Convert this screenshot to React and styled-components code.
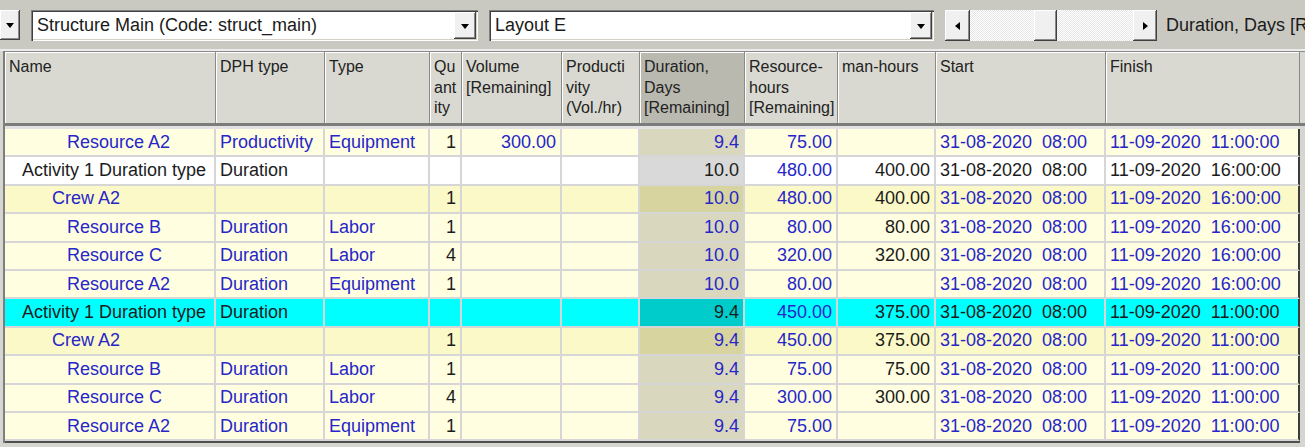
import React from 'react';
import styled, { createGlobalStyle } from 'styled-components';

const GlobalStyle = createGlobalStyle`
  body {
    margin: 0;
    background: #d6d6d0;
    font-family: "Liberation Sans", Arial, sans-serif;
  }
`;

const COLS = '211px 109px 105px 32px 100px 78px 105px 93px 98px 170px 194px';

const BLUE = '#2626c9';
const INK = '#1c1c1c';

const tones = {
  res: { bg: '#fffee1', dur: '#d9d7be' },
  crew: { bg: '#fcf9c8', dur: '#d7d4a0' },
  act: { bg: '#ffffff', dur: '#d9d9d9' },
  sel: { bg: '#00ffff', dur: '#00cccc' },
};

const indent = { act: 17, crew: 47, res: 62, sel: 17 };

const Page = styled.div`
  width: 1305px;
  height: 447px;
  overflow: hidden;
`;

const Toolbar = styled.div`
  height: 51px;
  box-sizing: border-box;
  background: #c9c9c1;
  border-bottom: 2px solid #ececec;
  display: flex;
  align-items: flex-start;
  padding-top: 10px;
  white-space: nowrap;
  overflow: hidden;
`;

const Combo = styled.div`
  display: flex;
  width: ${(p) => p.$width}px;
  margin-left: ${(p) => p.$gap}px;
  height: 31px;
  box-sizing: border-box;
  padding: 2px;
  background: #fff;
  box-shadow: inset 1px 1px #808080, inset 2px 2px #404040, inset -1px -1px #ffffff,
    inset -2px -2px #d4d0c8;
  flex-shrink: 0;
`;

const ComboText = styled.div`
  flex: 1;
  padding-left: 4px;
  font-size: 18px;
  line-height: 27px;
  color: #1a1a1a;
  overflow: hidden;
`;

const RaisedButton = styled.div`
  width: ${(p) => p.$width}px;
  height: ${(p) => p.$height || 27}px;
  box-sizing: border-box;
  background: #f0f0f0;
  box-shadow: inset -1px -1px #404040, inset 1px 1px #ffffff, inset -2px -2px #8a8a8a;
  display: flex;
  align-items: center;
  justify-content: center;
  flex-shrink: 0;
`;

const DownArrow = styled.span`
  width: 0;
  height: 0;
  border-left: 4.5px solid transparent;
  border-right: 4.5px solid transparent;
  border-top: 5px solid #000;
  margin-top: 1px;
`;

const SideArrow = styled.span`
  width: 0;
  height: 0;
  border-top: 4.5px solid transparent;
  border-bottom: 4.5px solid transparent;
  ${(p) => (p.$dir === 'left' ? 'border-right: 5px solid #000;' : 'border-left: 5px solid #000;')}
`;

const Scroll = styled.div`
  display: flex;
  margin-left: 11px;
  width: 212px;
  height: 31px;
  flex-shrink: 0;
`;

const Track = styled.div`
  width: ${(p) => p.$width}px;
  height: 31px;
  background: repeating-conic-gradient(#ffffff 0 25%, #e6e6e6 0 50%) 0 0 / 2px 2px;
`;

const ToolLabel = styled.div`
  margin-left: 9px;
  font-size: 18px;
  line-height: 31px;
  color: #1a1a1a;
`;

const Table = styled.div`
  margin-left: 3px;
  border-left: 2px solid #7e7e7e;
`;

const HeaderRow = styled.div`
  display: grid;
  grid-template-columns: ${COLS};
  height: 75px;
  box-sizing: border-box;
  border-top: 1px solid #8a8a8a;
  border-bottom: 3px solid #7c7c7c;
  background: #d9d9d1;
`;

const HeadCell = styled.div`
  box-sizing: border-box;
  padding: 5px 3px 0 4px;
  font-size: 16px;
  line-height: 20.5px;
  color: #222;
  background: ${(p) => (p.$active ? '#b9b9b0' : '#d9d9d1')};
  border-right: 1px solid #8a8a8a;
  box-shadow: inset 1px 1px #ffffff;
  overflow: hidden;
  white-space: nowrap;
`;

const Body = styled.div`
  width: 1295px;
  border-top: 3px solid #e2e2e2;
  border-bottom: 2px solid #505050;
`;

const Row = styled.div`
  display: grid;
  grid-template-columns: ${COLS};
  height: 28.4px;
`;

const Cell = styled.div`
  box-sizing: border-box;
  display: flex;
  align-items: center;
  justify-content: ${(p) => (p.$right ? 'flex-end' : 'flex-start')};
  padding: 0 4px 0 ${(p) => p.$indent || 4}px;
  background: ${(p) => p.$bg};
  color: ${(p) => p.$ink};
  font-size: 18px;
  white-space: pre;
  overflow: hidden;
  border-bottom: 2px solid #d6d6d6;
  border-right: 2px solid ${(p) => (p.$edge ? '#3c3c3c' : '#d6d6d6')};
`;

const headers = [
  { label: ['Name'] },
  { label: ['DPH type'] },
  { label: ['Type'] },
  { label: ['Qu', 'ant', 'ity'] },
  { label: ['Volume', '[Remaining]'] },
  { label: ['Producti', 'vity', '(Vol./hr)'] },
  { label: ['Duration,', 'Days', '[Remaining]'], active: true },
  { label: ['Resource-', 'hours', '[Remaining]'] },
  { label: ['man-hours'] },
  { label: ['Start'] },
  { label: ['Finish'] },
];

const S = '31-08-2020  08:00';
const F11 = '11-09-2020  11:00:00';
const F16 = '11-09-2020  16:00:00';

const rows = [
  ['res', 'Resource A2', 'Productivity', 'Equipment', '1', '300.00', '', '9.4', '75.00', '', S, F11],
  ['act', 'Activity 1 Duration type', 'Duration', '', '', '', '', '10.0', '480.00', '400.00', S, F16],
  ['crew', 'Crew A2', '', '', '1', '', '', '10.0', '480.00', '400.00', S, F16],
  ['res', 'Resource B', 'Duration', 'Labor', '1', '', '', '10.0', '80.00', '80.00', S, F16],
  ['res', 'Resource C', 'Duration', 'Labor', '4', '', '', '10.0', '320.00', '320.00', S, F16],
  ['res', 'Resource A2', 'Duration', 'Equipment', '1', '', '', '10.0', '80.00', '', S, F16],
  ['sel', 'Activity 1 Duration type', 'Duration', '', '', '', '', '9.4', '450.00', '375.00', S, F11],
  ['crew', 'Crew A2', '', '', '1', '', '', '9.4', '450.00', '375.00', S, F11],
  ['res', 'Resource B', 'Duration', 'Labor', '1', '', '', '9.4', '75.00', '75.00', S, F11],
  ['res', 'Resource C', 'Duration', 'Labor', '4', '', '', '9.4', '300.00', '300.00', S, F11],
  ['res', 'Resource A2', 'Duration', 'Equipment', '1', '', '', '9.4', '75.00', '', S, F11],
];

// columns: 0 name,1 dph,2 type,3 qu,4 vol,5 prod,6 dur,7 rh,8 mh,9 start,10 finish
const RIGHT = [3, 4, 5, 6, 7, 8];

const inkFor = (kind, col) => {
  if (col === 3 || col === 8) return INK;
  if (col === 7) return BLUE;
  return kind === 'act' || kind === 'sel' ? INK : BLUE;
};

const App = () => (
  <Page>
    <GlobalStyle />
    <Toolbar>
      <RaisedButton $width={20} $height={30}>
        <DownArrow />
      </RaisedButton>
      <Combo $width={447} $gap={11}>
        <ComboText>Structure Main (Code: struct_main)</ComboText>
        <RaisedButton $width={22}>
          <DownArrow />
        </RaisedButton>
      </Combo>
      <Combo $width={445} $gap={11}>
        <ComboText>Layout E</ComboText>
        <RaisedButton $width={22}>
          <DownArrow />
        </RaisedButton>
      </Combo>
      <Scroll>
        <RaisedButton $width={25} $height={31}>
          <SideArrow $dir="left" />
        </RaisedButton>
        <Track $width={64} />
        <RaisedButton $width={23} $height={31} />
        <Track $width={76} />
        <RaisedButton $width={24} $height={31}>
          <SideArrow $dir="right" />
        </RaisedButton>
      </Scroll>
      <ToolLabel>Duration, Days [Remaining]</ToolLabel>
    </Toolbar>
    <Table>
      <HeaderRow>
        {headers.map((h, i) => (
          <HeadCell key={i} $active={h.active}>
            {h.label.map((line, j) => (
              <div key={j}>{line}</div>
            ))}
          </HeadCell>
        ))}
      </HeaderRow>
      <Body>
        {rows.map(([kind, ...cells], r) => (
          <Row key={r}>
            {cells.map((value, c) => (
              <Cell
                key={c}
                $right={RIGHT.includes(c)}
                $indent={c === 0 ? indent[kind] : 4}
                $bg={c === 6 ? tones[kind].dur : tones[kind].bg}
                $ink={inkFor(kind, c)}
                $edge={c === 10}
              >
                {value}
              </Cell>
            ))}
          </Row>
        ))}
      </Body>
    </Table>
  </Page>
);

export default App;
